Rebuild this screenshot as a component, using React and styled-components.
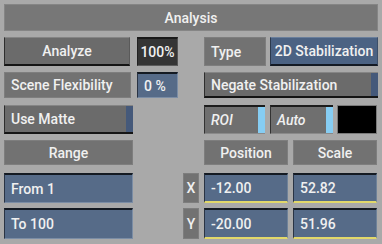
import React from "react";
import styled, { createGlobalStyle, css } from "styled-components";

const GlobalStyle = createGlobalStyle`
  html, body {
    margin: 0;
    padding: 0;
    background: #a9a9a9;
  }
  body {
    font-family: Roboto, "Liberation Sans", Arial, sans-serif;
    font-weight: 500;
    font-size: 14px;
    color: #f0f0f0;
  }
`;

function App() {
  return (
    <>
      <GlobalStyle />
      <Panel>
        <Header>Analysis</Header>

        <Row $mt={6}>
          <Group>
            <Button $w={126}>Analyze</Button>
            <DarkField $w={41} $gap={7}>100%</DarkField>
          </Group>
          <span />
          <Group>
            <Label $w={62} $left>Type</Label>
            <BlueButton $w={108} $gap={4}>2D Stabilization</BlueButton>
          </Group>
        </Row>

        <Row $h={26} $mt={6}>
          <Group>
            <Label $w={127} $left>Scene Flexibility</Label>
            <BlueField $w={41} $gap={6} $left>0 %</BlueField>
          </Group>
          <span />
          <Group>
            <Toggle $w={174}>Negate Stabilization</Toggle>
          </Group>
        </Row>

        <Row $h={29} $mt={7}>
          <Group>
            <Toggle $w={129}>Use Matte</Toggle>
          </Group>
          <span />
          <Group>
            <Chip $w={61}>ROI</Chip>
            <Chip $w={63} $gap={5}>Auto</Chip>
            <Swatch $gap={4} />
          </Group>
        </Row>

        <Row $h={25} $mt={6}>
          <Group>
            <Label $w={129}>Range</Label>
          </Group>
          <span />
          <Group>
            <Label $w={84}>Position</Label>
            <Label $w={84} $gap={5}>Scale</Label>
          </Group>
        </Row>

        <Row $h={30} $mt={8}>
          <Group>
            <BlueField $w={129} $left>From 1</BlueField>
          </Group>
          <Axis>X</Axis>
          <Group>
            <ValueField $w={84}>-12.00</ValueField>
            <ValueField $w={84} $gap={5}>52.82</ValueField>
          </Group>
        </Row>

        <Row $h={31} $mt={5}>
          <Group>
            <BlueField $w={129} $left>To 100</BlueField>
          </Group>
          <Axis>Y</Axis>
          <Group>
            <ValueField $w={84}>-20.00</ValueField>
            <ValueField $w={84} $gap={5}>51.96</ValueField>
          </Group>
        </Row>
      </Panel>
    </>
  );
}

const Panel = styled.div`
  width: 382px;
  height: 244px;
  box-sizing: border-box;
  padding: 4px;
  display: flex;
  flex-direction: column;
`;

const Header = styled.div`
  height: 27px;
  flex: none;
  box-sizing: border-box;
  background: #777777;
  border: 1px solid #858585;
  display: flex;
  align-items: center;
  justify-content: center;
`;

const Row = styled.div`
  display: grid;
  grid-template-columns: 174px 1fr 174px;
  flex: none;
  height: ${(p) => p.$h || 29}px;
  margin-top: ${(p) => p.$mt || 0}px;
`;

const Group = styled.div`
  display: flex;
  height: 100%;
`;

const base = css`
  box-sizing: border-box;
  width: ${(p) => p.$w}px;
  margin-left: ${(p) => p.$gap || 0}px;
  height: 100%;
  display: flex;
  align-items: center;
  justify-content: ${(p) => (p.$left ? "flex-start" : "center")};
  padding: ${(p) => (p.$left ? "0 6px" : "0")};
  white-space: nowrap;
`;

const Button = styled.div`
  ${base};
  background: #6b6b6b;
  border-top: 1px solid #858585;
  border-left: 1px solid #2e2e2e;
  border-bottom: 2px solid #151515;
  border-right: 1px solid #5a5a5a;
`;

const BlueButton = styled.div`
  ${base};
  background: #4b6283;
  border-top: 1px solid #6a7f9c;
  border-left: 1px solid #2c3a4e;
  border-bottom: 2px solid #141a24;
  border-right: 1px solid #3c4e68;
`;

const Label = styled.div`
  ${base};
  background: #727272;
  border: 1px solid #7e7e7e;
`;

const DarkField = styled.div`
  ${base};
  background: #353535;
  border-top: 2px solid #1a1a1a;
  border-left: 1px solid #222;
  border-right: 1px solid #555;
  border-bottom: 1px solid #5c5c5c;
`;

const BlueField = styled.div`
  ${base};
  background: #566b88;
  border-top: 2px solid #141a22;
  border-left: 1px solid #2a3444;
  border-right: 1px solid #7b8da5;
  border-bottom: 1px solid #7b8da5;
`;

const ValueField = styled.div`
  ${base};
  justify-content: flex-start;
  padding: 0 6px;
  background: #566b88;
  border-top: 2px solid #141a22;
  border-left: 1px solid #2a3444;
  border-right: 1px solid #6f8299;
  border-bottom: 2px solid #e2d86a;
`;

const Toggle = styled.div`
  ${base};
  justify-content: flex-start;
  padding: 0 6px;
  background: linear-gradient(
    to left,
    #45597a 0,
    #45597a 7px,
    #6b6b6b 7px
  );
  border-top: 1px solid #858585;
  border-left: 1px solid #2e2e2e;
  border-bottom: 2px solid #151515;
`;

const Chip = styled.div`
  ${base};
  justify-content: flex-start;
  padding: 0 6px;
  font-style: italic;
  background: linear-gradient(
    to left,
    #86cdf3 0,
    #86cdf3 7px,
    #6f6f6f 7px
  );
  border-top: 2px solid #1c1c1c;
  border-left: 1px solid #333;
  border-bottom: 1px solid #8a8a8a;
`;

const Swatch = styled.div`
  box-sizing: border-box;
  width: 40px;
  height: 100%;
  margin-left: ${(p) => p.$gap || 0}px;
  background: #000;
  border: 1px solid #7a7a7a;
`;

const Axis = styled.div`
  justify-self: center;
  width: 16px;
  box-sizing: border-box;
  height: 100%;
  background: #727272;
  border: 1px solid #7e7e7e;
  display: flex;
  align-items: center;
  justify-content: center;
`;

export default App;
